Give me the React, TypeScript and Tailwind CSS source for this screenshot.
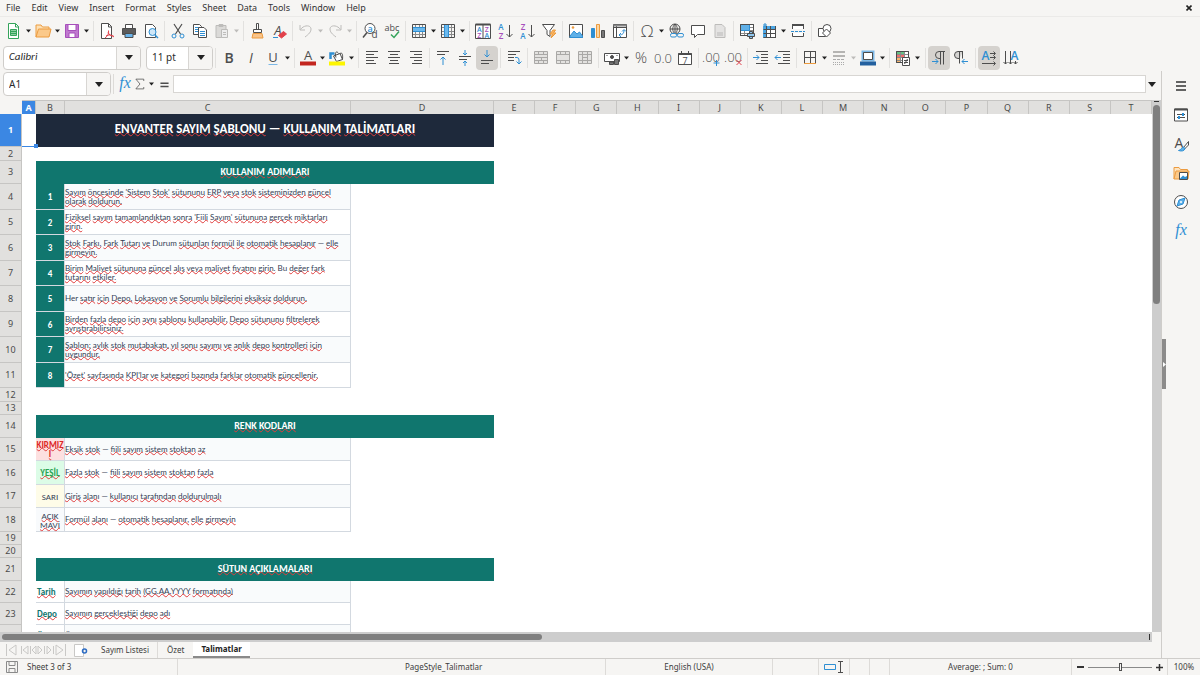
import type { ReactNode } from "react";
import { clsx } from "clsx";

const INK = "#4d4d4d";
const BLUE = "#2f8fd3";
const ORANGE = "#ec9b3f";
const GREEN = "#35a45b";
const PURPLE = "#a74fbb";
const RED = "#e2414b";
const FADED = "#bdbcba";

function Icon({ children, size = 16 }: { children: ReactNode; size?: number }) {
  return (
    <svg
      width={size}
      height={size}
      viewBox="0 0 16 16"
      fill="none"
      stroke={INK}
      strokeWidth="1"
      aria-hidden="true"
      className="shrink-0 overflow-visible"
    >
      {children}
    </svg>
  );
}

function Glyph({
  x = 8,
  y = 13,
  size = 14,
  fill = INK,
  serif,
  bold,
  light,
  italic,
  children,
}: {
  x?: number;
  y?: number;
  size?: number;
  fill?: string;
  serif?: boolean;
  bold?: boolean;
  light?: boolean;
  italic?: boolean;
  children: ReactNode;
}) {
  return (
    <text
      x={x}
      y={y}
      fontSize={size}
      fill={fill}
      stroke="none"
      textAnchor="middle"
      fontFamily={serif ? "Liberation Serif, serif" : "Open Sans, Noto Sans, sans-serif"}
      fontWeight={bold ? 600 : light ? 300 : 400}
      fontStyle={italic ? "italic" : "normal"}
    >
      {children}
    </text>
  );
}

function Lines({ d, color = INK }: { d: string; color?: string }) {
  return <path d={d} stroke={color} />;
}

const icons = {
  newDoc: (
    <>
      <path d="M2.5.5h7l3 3v12h-10z" fill="#fff" stroke={GREEN} />
      <path d="M9.5.5v3.500h3.500" stroke={GREEN} />
      <path d="M4.500 6.500h6v6h-6z M4.500 8.500h6 M4.500 10.500h6" stroke={GREEN} fill="#8ed0a2" />
    </>
  ),
  open: (
    <>
      <path d="M1 14V2h5l1.500 2H14v3" fill="#fde0b4" stroke={ORANGE} />
      <path d="M1 14l2.500-8H16l-2 8z" fill="#fbc98a" stroke={ORANGE} />
    </>
  ),
  save: (
    <>
      <path d="M1.500 1.500h13v13h-13z" fill="#c079cf" stroke={PURPLE} />
      <path d="M4 1.500h8v6H4z" fill="#fff" stroke={PURPLE} />
      <path d="M5 10h6v4.500H5z" fill="#fff" stroke={PURPLE} />
    </>
  ),
  pdf: (
    <>
      <path d="M2.500.5h7l3 3v12h-10z" fill="#fff" />
      <path d="M9.500.5v3.500h3.500" />
      <path d="M6 15c3-2 4-5 3.500-7.500M7 13c3-1.500 5-1.500 8 1M9 9c1 3 3 4 5.500 4" stroke={RED} />
    </>
  ),
  print: (
    <>
      <path d="M4.500 5V1.500h7V5" fill="#fff" />
      <path d="M1.500 5.500h13v6h-13z" fill="#5b5b5b" />
      <path d="M4 10.500h8v4H4z" fill="#6ab4ea" stroke={INK} />
    </>
  ),
  preview: (
    <>
      <path d="M2.500 1.500h7l3 3v10h-10z" fill="#fff" />
      <circle cx="9.500" cy="9" r="3.500" fill="#cfe7f8" stroke={BLUE} />
      <path d="M12 12l3 3" stroke={BLUE} strokeWidth="1.500" />
    </>
  ),
  cut: (
    <>
      <path d="M4 1l6.500 10M12 1L5.500 11" strokeWidth="1.200" />
      <circle cx="4" cy="13" r="2" stroke={BLUE} />
      <circle cx="12" cy="13" r="2" stroke={BLUE} />
    </>
  ),
  copy: (
    <>
      <path d="M1.500 1.500h6l2 2v8h-8z" fill="#fff" />
      <path d="M3 4.500h4M3 6.500h4M3 8.500h3" stroke={BLUE} />
      <path d="M6.500 4.500h5.500l2.500 2.500v7.500h-8z" fill="#fff" />
      <path d="M8 8.500h5M8 10.500h5M8 12.500h5" stroke={BLUE} />
    </>
  ),
  paste: (
    <>
      <path d="M2 2.500h10v12H2z" fill="#dbdad8" stroke={FADED} />
      <path d="M5 1.500h4v2H5z" fill={FADED} stroke={FADED} />
      <path d="M7.500 6.500h6v8h-6z M9 9.500h3 M9 11.500h3" fill="#eee" stroke={FADED} />
    </>
  ),
  clone: (
    <>
      <path d="M7.500.5h2v6h-2z" fill="#fff" />
      <path d="M4.500 6.500h8v3h-8z" fill="#fff" />
      <path d="M4 10.500h9l1 4.500H3z" fill="#f9c48a" stroke={ORANGE} />
    </>
  ),
  clear: (
    <>
      <Glyph x={7} y={12} size={13} italic>A</Glyph>
      <path d="M2 14.500h5" stroke={BLUE} />
      <path d="M7.500 12.500l5-4 3 2.500-5 4z" fill={RED} stroke={RED} />
    </>
  ),
  undo: <path d="M2 2v5h5M2.500 6.500C6 1.500 13 2 13 6c0 3-2 5-6 8" stroke={FADED} />,
  redo: <path d="M14 2v5H9M13.500 6.500C10 1.500 3 2 3 6c0 3 2 5 6 8" stroke={FADED} />,
  find: (
    <>
      <circle cx="8" cy="5.500" r="5" fill="#fff" />
      <path d="M5 9.500L1 14.500" strokeWidth="1.500" />
      <Glyph x={8} y={8.5} size={9} fill={BLUE} bold>a</Glyph>
      <Glyph x={12.5} y={15} size={10}>d</Glyph>
    </>
  ),
  spelling: (
    <>
      <Glyph x={8} y={7.5} size={9}>abc</Glyph>
      <path d="M7 11.500l3 3 5-6" stroke={GREEN} strokeWidth="1.500" />
    </>
  ),
  rows: (
    <>
      <path
        d="M4.500 1v13M8.500 1v13M11.500 1v13M1.500 4.500h13M1.500 8.500h13M1.500 11.500h13"
        stroke="#8a8a8a"
      />
      <path d="M1.500 4.500h13v4h-13z" fill="#6bb9ee" stroke={BLUE} />
      <path d="M1.500 1.500h13v13h-13z" />
    </>
  ),
  columns: (
    <>
      <path
        d="M4.500 1v13M8.500 1v13M11.500 1v13M1.500 4.500h13M1.500 8.500h13M1.500 11.500h13"
        stroke="#8a8a8a"
      />
      <path d="M4.500 1.500h4v13h-4z" fill="#6bb9ee" stroke={BLUE} />
      <path d="M1.500 1.500h13v13h-13z" />
    </>
  ),
  sort: (
    <>
      <path d="M.5 1.500h15v14H.5zM8 1.500v14" fill="#fff" />
      <path d="M.5 1.500h15" strokeWidth="2" />
      <Glyph x={4.2} y={8.5} size={7} fill={BLUE} bold>A</Glyph>
      <Glyph x={4.2} y={15} size={7} fill={PURPLE} bold>Z</Glyph>
      <Glyph x={11.8} y={8.5} size={7} fill={PURPLE} bold>Z</Glyph>
      <Glyph x={11.8} y={15} size={7} fill={BLUE} bold>A</Glyph>
    </>
  ),
  sortAsc: (
    <>
      <Glyph x={4} y={7} size={8} fill={BLUE} bold>A</Glyph>
      <Glyph x={4} y={15.5} size={8} fill={PURPLE} bold>Z</Glyph>
      <path d="M12.500 2v12M9.500 11l3 3 3-3" />
    </>
  ),
  sortDesc: (
    <>
      <Glyph x={4} y={7} size={8} fill={PURPLE} bold>Z</Glyph>
      <Glyph x={4} y={15.5} size={8} fill={BLUE} bold>A</Glyph>
      <path d="M12.500 2v12M9.500 11l3 3 3-3" />
    </>
  ),
  filter: (
    <>
      <path d="M1.500 1.500h12L9 7.500v6l-3-2v-4z" fill="#fff" />
      <path d="M12 7l-3 4h2.500L10 15l5-5h-2.500L14.500 7z" fill="#fbb45e" stroke={ORANGE} />
    </>
  ),
  image: (
    <>
      <path d="M1.500 1.500h13v13h-13z" fill="#fff" />
      <path d="M2 13l4-5 3 3 2.500-2 3 4v1.500H2z" fill="#5fb0e8" stroke={BLUE} />
      <circle cx="5" cy="4.500" r="1.300" fill={ORANGE} stroke="none" />
    </>
  ),
  chart: (
    <>
      <path d="M1.500 5.500h3v9h-3z" fill={BLUE} stroke={BLUE} />
      <path d="M6.500 1.500h3v13h-3z" fill="#fbd6a2" stroke={ORANGE} />
      <path d="M11.500 7.500h3v7h-3z" fill="#777" />
    </>
  ),
  pivot: (
    <>
      <path d="M1.500 1.500h13v13h-13zM1.500 4.500h13M4.500 1.500v13" fill="#fff" />
      <path d="M1.500 2.500h13" stroke="#8a8a8a" strokeWidth="2" />
      <path d="M7 12c4 0 5-2 5-5M9 10l-2 2 2 2M10 8.500l2-2 2 2" stroke={BLUE} />
    </>
  ),
  symbol: <Glyph y={14} size={17} light>Ω</Glyph>,
  link: (
    <>
      <circle cx="7" cy="6" r="5" />
      <path d="M2 6h10M7 1v10M7 1C4 4 4 8 7 11M7 1c3 3 3 7 0 10" />
      <rect x="2.500" y="10.500" width="6" height="3.500" rx="1.500" fill="#f6f5f3" stroke={BLUE} />
      <rect x="9.500" y="10.500" width="6" height="3.500" rx="1.500" fill="#f6f5f3" stroke={BLUE} />
    </>
  ),
  comment: <path d="M1.500 2.500h13v9H7.500L4.500 14.500v-3h-3z" fill="#fff" />,
  header: (
    <>
      <path d="M3 1.500h7l3 3v10H3z" fill="#e4e3e2" stroke={FADED} />
      <path d="M5 9h6v4H5z" fill="#cfcecd" stroke="none" />
    </>
  ),
  printArea: (
    <>
      <path d="M1.500 1.500h13v11h-13z" fill="#fff" />
      <path d="M1.500 4.500h13M1.500 7.500h13M1.500 10.500h8M5.500 1.500v11M10.500 1.500v9" stroke="#8a8a8a" />
      <path d="M1.500 1.500h9v6h-9z" fill="#5fb0e8" stroke={BLUE} />
      <path d="M14.500 9V1.500H1.500v11H8" />
      <path d="M8.500 10.500h7v3h-7zM10.500 8.500h3v2h-3zM10.500 13.500h3v2h-3z" fill="#8fc6ee" />
    </>
  ),
  freeze: (
    <>
      <path d="M5.500 6.500h9v8h-9z" fill="#fff" />
      <path d="M2 3h12.500v3.500H5.500V15H2z" fill="#4ba6e4" stroke="none" />
      <path d="M2.500 6.500h12M5.500 3v12M9.500 3v12M2.500 10.500h12M14.500 3v12M2.500 14.500h12" />
      <path d="M4 0v4M2 2h4" stroke={BLUE} />
    </>
  ),
  split: (
    <>
      <path d="M2.500 6V2.500h11V6M2.500 10v3.500h11V10" fill="#fff" />
      <path d="M2 2h12" strokeWidth="2" />
      <path d="M1 8.500h14" stroke={BLUE} strokeDasharray="3 1" />
    </>
  ),
  shapes: (
    <>
      <path d="M1.500 5.500h7v8h-7z" fill="#fff" />
      <circle cx="10" cy="5.500" r="4" fill="#fff" />
      <path d="M9.500 6l4 4-4 4-4-4z" fill="#fff" />
    </>
  ),
  bold: <Glyph bold size={14}>B</Glyph>,
  italic: <Glyph italic size={14}>I</Glyph>,
  underline: (
    <>
      <Glyph y={12} size={13}>U</Glyph>
      <path d="M3.500 14.500h9" stroke="#7cb8e6" />
    </>
  ),
  fontColor: (
    <>
      <Glyph y={10} size={13}>A</Glyph>
      <path d="M0 13.500h16" stroke="#c3261f" strokeWidth="4" />
    </>
  ),
  highlight: (
    <>
      <path d="M4.500 6L11 3.500l2.500 6-6 2z" fill="#fff" />
      <path d="M1.500 9V3.500h4" stroke={BLUE} strokeWidth="2.500" />
      <path d="M7 7.500C5 2 8 .5 9.500 3.500M11 3.500c2-1 3 0 2.500 6" />
      <path d="M0 13.500h16" stroke="#fdf500" strokeWidth="4" />
    </>
  ),
  left: <Lines d="M2 1.500h12M2 4.500h8M2 7.500h12M2 10.500h8M2 13.500h10" />,
  center: <Lines d="M2 1.500h12M4 4.500h8M2 7.500h12M4 10.500h8M3 13.500h10" />,
  right: <Lines d="M2 1.500h12M6 4.500h8M2 7.500h12M6 10.500h8M4 13.500h10" />,
  top: (
    <>
      <Lines d="M2 1.500h12M2 4.500h8" />
      <Lines color={BLUE} d="M8 7v8M5.500 9.500L8 7l2.500 2.500" />
    </>
  ),
  middle: (
    <>
      <Lines d="M2 6.500h12M2 9.500h8" />
      <Lines color={BLUE} d="M8 0v5M6 3l2 2 2-2M8 16v-5M6 13l2-2 2 2" />
    </>
  ),
  bottom: (
    <>
      <Lines d="M2 10.500h12M2 13.500h8" />
      <Lines color={BLUE} d="M8 0v7M5.500 4.500L8 7l2.500-2.500" />
    </>
  ),
  wrap: (
    <>
      <Lines d="M2 1.500h12M2 4.500h8M2 7.500h6M2 10.500h6" />
      <Lines color={BLUE} d="M9 7.500h2q2 0 2 2.500v4M10.500 11.500l2.500 2.500 2.500-2.500" />
    </>
  ),
  merge1: (
    <path
      d="M1.500 1.500h13v12h-13zM1.500 4.500h13M1.500 7.500h13M1.500 10.500h13M5.500 1.500v3M10.500 1.500v3M8.500 7.500v3M5.500 10.500v3M10.500 10.500v3"
      stroke="#a9a8a6"
      fill="#e3e2e0"
    />
  ),
  merge2: (
    <path
      d="M1.500 1.500h13v12h-13zM1.500 4.500h13M1.500 10.500h13M5.500 1.500v3M10.500 1.500v3M5.500 10.500v3M10.500 10.500v3"
      stroke="#a9a8a6"
      fill="#e3e2e0"
    />
  ),
  merge3: (
    <path
      d="M1.500 1.500h13v12h-13zM1.500 4.500h13M1.500 10.500h13M5.500 1.500v12M10.500 1.500v12M5.500 7.500h5"
      stroke="#a9a8a6"
      fill="#e3e2e0"
    />
  ),
  currency: (
    <>
      <path d="M.5 3.500h15v8H.5z" fill="#fff" />
      <circle cx="8" cy="7" r="1.500" fill={INK} />
      <path d="M2.500 5.500h1M12.500 5.500h1" />
      <path d="M5.500 12v2.500h4V12zM10.500 9.500h4v5h-4z" fill="#777" />
    </>
  ),
  percent: <Glyph y={13} size={15} light>%</Glyph>,
  number: <Glyph y={13} size={13} light>0.0</Glyph>,
  date: (
    <>
      <path d="M1.500 3.500h13v11h-13z" fill="#fff" />
      <path d="M1.500 4h13" strokeWidth="2" />
      <path d="M4.500 1v3M11.500 1v3" />
      <Glyph y={13.5} size={9}>7</Glyph>
    </>
  ),
  addDecimal: (
    <>
      <Glyph x={7} y={12} size={13} light>.00</Glyph>
      <path d="M12.500 10v6M9.500 13h6" stroke={BLUE} />
    </>
  ),
  delDecimal: (
    <>
      <Glyph x={7} y={12} size={13} light>.00</Glyph>
      <path d="M10.500 10l5 5M15.500 10l-5 5" stroke={RED} />
    </>
  ),
  indent: (
    <>
      <Lines d="M3 1.500h12M8 4.500h7M8 7.500h7M8 10.500h7M3 13.500h12" />
      <Lines color={BLUE} d="M0 7.500h6M3.500 5L6 7.500 3.500 10" />
    </>
  ),
  outdent: (
    <>
      <Lines d="M3 1.500h12M8 4.500h7M8 7.500h7M8 10.500h7M3 13.500h12" />
      <Lines color={BLUE} d="M0 7.500h6M2.500 5L0 7.500 2.500 10" />
    </>
  ),
  borders: (
    <>
      <path d="M2 1.500h12M2.500 1.500v12M8.500 1.500v12M13.500 1.500v12M2 7.500h12" />
      <path d="M2 13.500h12" stroke={ORANGE} />
    </>
  ),
  borderStyle: (
    <>
      <path d="M2 2h12M2 6h12" stroke="#b5b4b2" strokeWidth="2" />
      <path d="M2 9.500h12" stroke="#aaa" strokeDasharray="3 1" />
      <path d="M2 12.500h12M2 14.500h12" stroke="#aaa" strokeDasharray="1 1" />
    </>
  ),
  borderColor: (
    <>
      <path d="M2.500 1.500h11v9h-11z" fill="#fff" stroke="#7db9e8" strokeWidth="2" />
      <path d="M3.500 2.500h9v7h-9z" />
      <path d="M0 13.500h16" stroke="#23609f" strokeWidth="4" />
    </>
  ),
  conditional: (
    <>
      <path d="M1.500 1.500h12v11h-12z" fill="#fff" />
      <path d="M2 2h7.500v2.500H2z" fill="#67c084" stroke="none" />
      <path d="M2 5h7.500v2.500H2z" fill="#ef6f6f" stroke="none" />
      <path d="M2 8h3.500v4H2z" fill="#f9b66d" stroke="none" />
      <path d="M1.500 4.500h12M1.500 7.500h12M1.500 10.500h12M5.500 1.500v11M9.500 1.500v11" stroke="#8a8a8a" />
      <path d="M1.500 1.500h12v11h-12z" />
      <path d="M7.500 7.500h7v8h-7z" fill="#fff" />
      <path d="M9 10.500h4M9 12.500h4M12.500 9l-3 5" />
    </>
  ),
  ltr: (
    <>
      <path d="M14 1.500H8a3.500 3.500 0 0 0 0 7h1.500M9.500 1.500v13M12.500 1.500v13" />
      <Lines color={BLUE} d="M1 11.500h6M4.500 9L7 11.500 4.500 14" />
    </>
  ),
  rtl: (
    <>
      <path d="M10 1.500H5a3.500 3.500 0 0 0 0 7h1.500M6.500 1.500v12M9.500 1.500v7" fill="#d5d4d2" />
      <Lines color={BLUE} d="M9 11.500h6M11.500 9L9 11.500l2.500 2.500" />
    </>
  ),
  textRight: (
    <>
      <Glyph x={4.5} y={10} size={12} fill={BLUE} bold>A</Glyph>
      <path d="M9 3.500h5M9 7.500h5M1 13.500h13M12.500 1.500l2 2-2 2M12.500 5.500l2 2-2 2M12.500 11.500l2 2-2 2" />
    </>
  ),
  textDown: (
    <>
      <Glyph x={11.5} y={10} size={12} fill={BLUE} bold>A</Glyph>
      <path d="M2.500 1v13M7.500 1v13M12.500 11v3M.5 12l2 2 2-2M5.500 12l2 2 2-2M10.500 12l2 2 2-2" />
    </>
  ),
  fx: <Glyph y={12} size={16} fill={BLUE} serif italic>fx</Glyph>,
  sum: <path d="M13 4V1.500H2.500L8 8l-5.500 6.500H13V12" />,
  equals: <path d="M3 6.500h10M3 10.500h10" strokeWidth="2" />,
  menu: <path d="M3 4h10M3 8h10M3 12h10" strokeWidth="1.600" stroke="#333" />,
  properties: (
    <>
      <path d="M1.500 2h13v12h-13z" fill="#fff" />
      <path d="M1.500 2.500h13" strokeWidth="2" />
      <path d="M4 7.500h8M4 10.500h8" />
      <path d="M10 6v3M6 9v3" stroke={BLUE} strokeWidth="2" />
    </>
  ),
  styles: (
    <>
      <Glyph x={6} y={12} size={14}>A</Glyph>
      <path d="M15.500 5.500l-5 6 1 1.500 4-4z" fill="#fff" />
      <path d="M10.500 11c-2 0-2 3-5 3.500 3 1 6 .5 6.500-2z" fill="#5fb0e8" stroke={BLUE} />
    </>
  ),
  gallery: (
    <>
      <path d="M1 14V2.500h5l1.500 2h7v3" stroke={ORANGE} fill="#fde3bf" />
      <path d="M1 14l2-8h13l-1 8z" fill="#fbc98a" stroke={ORANGE} />
      <path d="M6.500 7.500h8v7h-8z" fill="#fff" />
      <path d="M7 13.500l3-3 2 1.500 2-1v3H7z" fill={BLUE} stroke="none" />
    </>
  ),
  navigator: (
    <>
      <circle cx="8" cy="8" r="6.500" fill="#fff" />
      <path d="M12 4l-2 6-6 2 2-6z" fill="#5fb0e8" stroke={BLUE} />
      <circle cx="8" cy="8" r="1" fill="#fff" stroke="none" />
    </>
  ),
  disk: (
    <>
      <path d="M2.500 2.500h11v11h-11z" stroke="#8a8a8a" />
      <path d="M5 2.500h6v4H5zM5 9.500h6v4H5z" stroke="#8a8a8a" />
    </>
  ),
};

type IconName = keyof typeof icons;

interface Tool {
  icon: IconName;
  label: string;
  menu?: boolean;
  off?: boolean;
  active?: boolean;
}

const STANDARD: Tool[][] = [
  [
    { icon: "newDoc", label: "New", menu: true },
    { icon: "open", label: "Open", menu: true },
    { icon: "save", label: "Save", menu: true },
  ],
  [
    { icon: "pdf", label: "Export as PDF" },
    { icon: "print", label: "Print" },
    { icon: "preview", label: "Print Preview" },
  ],
  [
    { icon: "cut", label: "Cut" },
    { icon: "copy", label: "Copy" },
    { icon: "paste", label: "Paste", menu: true, off: true },
  ],
  [
    { icon: "clone", label: "Clone Formatting" },
    { icon: "clear", label: "Clear Direct Formatting" },
  ],
  [
    { icon: "undo", label: "Undo", menu: true, off: true },
    { icon: "redo", label: "Redo", menu: true, off: true },
  ],
  [
    { icon: "find", label: "Find and Replace" },
    { icon: "spelling", label: "Spelling" },
  ],
  [
    { icon: "rows", label: "Row", menu: true },
    { icon: "columns", label: "Column", menu: true },
  ],
  [
    { icon: "sort", label: "Sort" },
    { icon: "sortAsc", label: "Sort Ascending" },
    { icon: "sortDesc", label: "Sort Descending" },
    { icon: "filter", label: "AutoFilter" },
  ],
  [
    { icon: "image", label: "Insert Image" },
    { icon: "chart", label: "Insert Chart" },
    { icon: "pivot", label: "Insert Pivot Table" },
  ],
  [
    { icon: "symbol", label: "Special Character", menu: true },
    { icon: "link", label: "Insert Hyperlink" },
    { icon: "comment", label: "Insert Comment" },
    { icon: "header", label: "Headers and Footers", off: true },
  ],
  [
    { icon: "printArea", label: "Define Print Area" },
    { icon: "freeze", label: "Freeze Rows and Columns", menu: true },
    { icon: "split", label: "Split Window" },
  ],
  [{ icon: "shapes", label: "Show Draw Functions" }],
];

const FORMATTING: Tool[][] = [
  [
    { icon: "bold", label: "Bold" },
    { icon: "italic", label: "Italic" },
    { icon: "underline", label: "Underline", menu: true },
  ],
  [
    { icon: "fontColor", label: "Font Color", menu: true },
    { icon: "highlight", label: "Background Color", menu: true },
  ],
  [
    { icon: "left", label: "Align Left" },
    { icon: "center", label: "Center Horizontally" },
    { icon: "right", label: "Align Right" },
  ],
  [
    { icon: "top", label: "Align Top" },
    { icon: "middle", label: "Center Vertically" },
    { icon: "bottom", label: "Align Bottom", active: true },
  ],
  [{ icon: "wrap", label: "Wrap Text" }],
  [
    { icon: "merge1", label: "Merge and Center", off: true },
    { icon: "merge2", label: "Merge Cells", off: true },
    { icon: "merge3", label: "Unmerge Cells", off: true },
  ],
  [
    { icon: "currency", label: "Format as Currency", menu: true },
    { icon: "percent", label: "Format as Percent" },
    { icon: "number", label: "Format as Number" },
    { icon: "date", label: "Format as Date" },
  ],
  [
    { icon: "addDecimal", label: "Add Decimal Place" },
    { icon: "delDecimal", label: "Delete Decimal Place" },
  ],
  [
    { icon: "indent", label: "Increase Indent" },
    { icon: "outdent", label: "Decrease Indent" },
  ],
  [
    { icon: "borders", label: "Borders", menu: true },
    { icon: "borderStyle", label: "Border Style", menu: true, off: true },
    { icon: "borderColor", label: "Border Color", menu: true },
  ],
  [{ icon: "conditional", label: "Conditional", menu: true }],
  [
    { icon: "ltr", label: "Left-To-Right", active: true },
    { icon: "rtl", label: "Right-To-Left" },
  ],
  [
    { icon: "textRight", label: "Text direction from left to right", active: true },
    { icon: "textDown", label: "Text direction from top to bottom" },
  ],
];

const MENUS = ["File", "Edit", "View", "Insert", "Format", "Styles", "Sheet", "Data", "Tools", "Window", "Help"];

const SIDEBAR: { icon: IconName; label: string }[] = [
  { icon: "menu", label: "Sidebar Settings" },
  { icon: "properties", label: "Properties" },
  { icon: "styles", label: "Styles" },
  { icon: "gallery", label: "Gallery" },
  { icon: "navigator", label: "Navigator" },
  { icon: "fx", label: "Functions" },
];

const COLUMNS = "ABCDEFGHIJKLMNOPQRST".split("");

type Row =
  | { kind: "empty"; h: string }
  | { kind: "title"; h: string; text: string }
  | { kind: "section"; h: string; text: string }
  | { kind: "item"; h: string; tag: string; tagClass: string; text: string; shaded?: boolean };

const STEP = "bg-[#10766e] text-white text-center font-bold";
const KEY = "text-[#10766e] text-left font-bold pl-px";

const ROWS: Row[] = [
  { kind: "title", h: "h-[33px]", text: "ENVANTER SAYIM ŞABLONU — KULLANIM TALİMATLARI" },
  { kind: "empty", h: "h-[14px]" },
  { kind: "section", h: "h-[23px]", text: "KULLANIM ADIMLARI" },
  { kind: "item", h: "h-[26px]", tag: "1", tagClass: STEP, shaded: true, text: "Sayım öncesinde 'Sistem Stok' sütununu ERP veya stok sisteminizden güncel\nolarak doldurun." },
  { kind: "item", h: "h-[25px]", tag: "2", tagClass: STEP, text: "Fiziksel sayım tamamlandıktan sonra 'Fiili Sayım' sütununa gerçek miktarları\ngirin." },
  { kind: "item", h: "h-[26px]", tag: "3", tagClass: STEP, shaded: true, text: "Stok Farkı, Fark Tutarı ve Durum sütunları formül ile otomatik hesaplanır — elle\ngirmeyin." },
  { kind: "item", h: "h-[25px]", tag: "4", tagClass: STEP, text: "Birim Maliyet sütununa güncel alış veya maliyet fiyatını girin. Bu değer fark\ntutarını etkiler." },
  { kind: "item", h: "h-[26px]", tag: "5", tagClass: STEP, shaded: true, text: "Her satır için Depo, Lokasyon ve Sorumlu bilgilerini eksiksiz doldurun." },
  { kind: "item", h: "h-[25px]", tag: "6", tagClass: STEP, text: "Birden fazla depo için aynı şablonu kullanabilir, Depo sütununu filtrelerek\nayrıştırabilirsiniz." },
  { kind: "item", h: "h-[26px]", tag: "7", tagClass: STEP, shaded: true, text: "Şablon; aylık stok mutabakatı, yıl sonu sayımı ve anlık depo kontrolleri için\nuygundur." },
  { kind: "item", h: "h-[25px]", tag: "8", tagClass: STEP, text: "'Özet' sayfasında KPI'lar ve kategori bazında farklar otomatik güncellenir." },
  { kind: "empty", h: "h-[14px]" },
  { kind: "empty", h: "h-[13px]" },
  { kind: "section", h: "h-[23px]", text: "RENK KODLARI" },
  { kind: "item", h: "h-[23px]", tag: "KIRMIZ\nI", tagClass: "bg-[#fde0e0] text-[#dc2626] text-center font-bold", shaded: true, text: "Eksik stok — fiili sayım sistem stoktan az" },
  { kind: "item", h: "h-[24px]", tag: "YEŞİL", tagClass: "bg-[#dcfce7] text-[#2ba455] text-center font-bold", text: "Fazla stok — fiili sayım sistem stoktan fazla" },
  { kind: "item", h: "h-[23px]", tag: "SARI", tagClass: "bg-[#fefce8] text-[#334155] text-center", shaded: true, text: "Giriş alanı — kullanıcı tarafından doldurulmalı" },
  { kind: "item", h: "h-[24px]", tag: "AÇIK\nMAVİ", tagClass: "bg-[#f8fafc] text-[#334155] text-center", text: "Formül alanı — otomatik hesaplanır, elle girmeyin" },
  { kind: "empty", h: "h-[13px]" },
  { kind: "empty", h: "h-[13px]" },
  { kind: "section", h: "h-[23px]", text: "SÜTUN AÇIKLAMALARI" },
  { kind: "item", h: "h-[22px]", tag: "Tarih", tagClass: KEY, shaded: true, text: "Sayımın yapıldığı tarih (GG.AA.YYYY formatında)" },
  { kind: "item", h: "h-[22px]", tag: "Depo", tagClass: KEY, text: "Sayımın gerçekleştiği depo adı" },
  { kind: "item", h: "h-[22px]", tag: "Ürün", tagClass: KEY, shaded: true, text: "Ürün veya malzeme kodu (stok kartı)" },
];

// Words the spell checker accepts, so they get no wavy line.
const KNOWN = new Set(["—", "Bu", "Her", "Durum", "SARI"]);

function Spelled({ text }: { text: string }) {
  return (
    <span className="whitespace-pre">
      {text.split(/(\s+)/).map((word, i) =>
        !word.trim() || KNOWN.has(word) || /^\d+$/.test(word) ? (
          word
        ) : (
          <span
            key={i}
            className="underline decoration-[#e03c3c] decoration-wavy decoration-1 underline-offset-[-1px] [text-decoration-skip-ink:none]"
          >
            {word}
          </span>
        ),
      )}
    </span>
  );
}

function Arrow({ off, big }: { off?: boolean; big?: boolean }) {
  return (
    <svg width={big ? 8 : 5} height={big ? 5 : 4} viewBox="0 0 8 5" aria-hidden="true">
      <path d="M0 0h8L4 5z" fill={off ? FADED : "#222"} />
    </svg>
  );
}

function Toolbar({ groups, label }: { groups: Tool[][]; label: string }) {
  return (
    <div role="toolbar" aria-label={label} className="flex h-full items-center">
      {groups.map((group, i) => (
        <div key={i} className="flex items-center">
          {i > 0 && (
            <span className={clsx("mr-[2px] h-5 w-px bg-[#e2e1df]", group[0].active ? "ml-[3px]" : "ml-[2px]")} />
          )}
          {group.map((tool) => (
            <div key={tool.icon} className={clsx("flex items-center", tool.menu && "last:pr-px")}>
              <button
                type="button"
                aria-label={tool.label}
                disabled={tool.off}
                aria-pressed={tool.active}
                className={clsx(
                  "flex h-6 w-[22px] items-center justify-center rounded",
                  tool.active && "bg-[#d5d2ce]",
                )}
              >
                <Icon>{icons[tool.icon]}</Icon>
              </button>
              {tool.menu && (
                <button
                  type="button"
                  aria-label={`${tool.label} options`}
                  disabled={tool.off}
                  className="flex h-6 w-[7px] items-center justify-center"
                >
                  <Arrow off={tool.off} />
                </button>
              )}
            </div>
          ))}
        </div>
      ))}
    </div>
  );
}

function Combo({ label, value, width, className }: { label: string; value: string; width: string; className?: string }) {
  return (
    <div className={clsx("flex h-6 shrink-0 overflow-hidden rounded border border-[#cfcdca] bg-white", width)}>
      <input
        aria-label={label}
        defaultValue={value}
        className={clsx("min-w-0 flex-1 px-[5px] text-[#2b2b2b] outline-none", className)}
      />
      <button
        type="button"
        aria-label={`${label} list`}
        className="flex w-6 items-center justify-center border-l border-[#d8d6d3] bg-[#f6f5f3]"
      >
        <Arrow big />
      </button>
    </div>
  );
}

function FormulaBar() {
  return (
    <div className="flex h-[29px] items-center bg-[#f6f5f3] pb-[3px] pl-[3px]">
      <Combo label="Name Box" value="A1" width="w-[108px]" className="text-[10px]" />
      <span className="mx-[2px] h-5 w-px bg-[#dddbd8]" />
      <button type="button" aria-label="Function Wizard" className="flex w-[18px] justify-center">
        <Icon>{icons.fx}</Icon>
      </button>
      <button type="button" aria-label="Select Function" className="flex w-[22px] items-center">
        <Icon size={12}>{icons.sum}</Icon>
        <span className="ml-[3px]">
          <Arrow />
        </span>
      </button>
      <button type="button" aria-label="Formula" className="flex w-[17px] justify-center">
        <Icon size={13}>{icons.equals}</Icon>
      </button>
      <input
        aria-label="Input line"
        className="h-[18px] min-w-0 flex-1 border border-[#d8d6d3] bg-white px-1 outline-none"
      />
      <button type="button" aria-label="Expand Formula Bar" className="flex w-[15px] justify-center pr-[3px]">
        <Arrow big />
      </button>
    </div>
  );
}

function SheetRow({ row, index }: { row: Row; index: number }) {
  const first = index === 0;
  return (
    <tr className={row.h}>
      <th
        scope="row"
        className={clsx(
          "border-r border-b border-[#c6c5c3] text-[9px] leading-3",
          first ? "bg-[#3b87e3] font-bold text-white" : "bg-[#e1e0de] font-normal text-[#4a4a4a]",
        )}
      >
        {index + 1}
      </th>
      <td className={clsx(first && "relative border-b border-[#3b87e3]")}>
        {first && <span className="absolute -right-[2px] -bottom-[2px] size-1 bg-[#3b87e3]" />}
      </td>
      {row.kind === "title" && (
        <td colSpan={3} className="bg-[#1e293b] pb-[3px] text-center text-[13px] leading-4 font-bold text-white">
          <Spelled text={row.text} />
        </td>
      )}
      {row.kind === "section" && (
        <td colSpan={3} className="bg-[#10766e] pb-px text-center text-[10px] leading-3 font-bold text-white">
          <Spelled text={row.text} />
        </td>
      )}
      {row.kind === "item" && (
        <>
          <td className={clsx("border-r border-b border-[#d3d9e0] text-[9px] leading-[9px]", row.tagClass)}>
            <Spelled text={row.tag} />
          </td>
          <td
            className={clsx(
              "border-r border-b border-[#d3d9e0] font-['Lato',sans-serif] text-[8px] leading-[9px] text-[#334155]",
              row.shaded && "bg-[#f9fbfc]",
            )}
          >
            <Spelled text={row.text} />
          </td>
        </>
      )}
    </tr>
  );
}

function Sheet() {
  return (
    <div className="min-h-0 min-w-0 flex-1 overflow-hidden bg-white">
      <table className="w-full table-fixed border-separate border-spacing-0 font-['Carlito','Lato',sans-serif]">
        <colgroup>
          <col className="w-[22px]" />
          <col className="w-[14px]" />
          <col className="w-[29px]" />
          <col className="w-[286px]" />
          <col className="w-[143px]" />
          <col span={16} />
        </colgroup>
        <thead className="font-['Noto_Sans','Open_Sans',sans-serif]">
          <tr className="h-[14px]">
            <td className="bg-[#f6f5f3]" />
            {COLUMNS.map((name) => (
              <th
                key={name}
                scope="col"
                className={clsx(
                  "border-t border-r border-[#c6c5c3] text-[9px] leading-3",
                  name === "A" ? "bg-[#3b87e3] font-bold text-white" : "bg-[#e1e0de] font-normal text-[#4a4a4a]",
                )}
              >
                {name}
              </th>
            ))}
          </tr>
        </thead>
        <tbody className="[&_th]:font-['Noto_Sans','Open_Sans',sans-serif]">
          {ROWS.map((row, i) => (
            <SheetRow key={i} row={row} index={i} />
          ))}
        </tbody>
      </table>
    </div>
  );
}

function TabBar() {
  return (
    <div className="flex h-4 items-stretch text-[8px] leading-3 text-[#3d3d3d]">
      <div className="flex w-[72px] items-center pl-[5px]">
        <svg width="62" height="12" viewBox="0 0 62 12" fill="none" stroke="#c9c8c6" aria-hidden="true">
          <path d="M1.500 0v12M11 1L4 6l7 5zM16.500 2v8M23 2l-5 4 5 4zM25.500 2v8M31 2l-4 4 4 4zM33 2l4 4-4 4zM39.500 2v8M42 2l4 4-4 4zM48.500 2v8M51 1l7 5-7 5zM60.500 0v12" />
        </svg>
      </div>
      <button type="button" aria-label="Add Sheet" className="flex w-[21px] items-center pl-[2px]">
        <svg width="14" height="13" viewBox="0 0 14 13" fill="none" aria-hidden="true">
          <path d="M.5.500h9v12h-9z" fill="#fff" stroke="#c9c8c6" />
          <circle cx="10.500" cy="7" r="2" stroke="#2b6cc4" strokeWidth="1.500" />
        </svg>
      </button>
      <div className="flex divide-x divide-[#dddbd8]">
        <button type="button" className="px-2">Sayım Listesi</button>
        <button type="button" className="px-[9px]">Özet</button>
      </div>
      <button type="button" className="border-b-2 border-[#8a8a8a] bg-white px-2 font-bold text-[#222]">
        Talimatlar
      </button>
    </div>
  );
}

function StatusBar() {
  return (
    <footer className="flex h-[17px] shrink-0 items-stretch divide-x divide-[#dddbd8] border-t border-[#cfcdca] text-[8px] leading-4 text-[#3d3d3d]">
      <div className="flex w-[178px] items-center pl-1">
        <Icon>{icons.disk}</Icon>
        <span className="ml-[7px]">Sheet 3 of 3</span>
      </div>
      <div className="flex flex-1 justify-end">
        <span className="w-[200px]">PageStyle_Talimatlar</span>
      </div>
      <div className="w-[167px] text-center">English (USA)</div>
      <div className="w-[46px]" />
      <div className="flex w-[31px] items-center justify-center">
        <svg width="20" height="12" viewBox="0 0 20 12" fill="none" aria-hidden="true">
          <path d="M.5 3.500h11v5H.5z" stroke="#2f8fd3" />
          <path d="M14 .5h5M14 11.500h5M16.500.5v11" stroke="#4d4d4d" />
        </svg>
      </div>
      <div className="w-5" />
      <div className="w-5" />
      <div className="w-[182px] text-center">Average: ; Sum: 0</div>
      <div className="flex w-[96px] items-center justify-between pr-1 pl-[5px]">
        <button type="button" aria-label="Zoom Out" className="h-[2px] w-[7px] bg-[#333]" />
        <input
          type="range"
          aria-label="Zoom"
          min={0}
          max={100}
          defaultValue={50}
          className="h-3 w-16 appearance-none bg-[linear-gradient(#8a8a8a,#8a8a8a)] bg-[length:100%_1px] bg-center bg-no-repeat [&::-webkit-slider-thumb]:h-2 [&::-webkit-slider-thumb]:w-[3px] [&::-webkit-slider-thumb]:appearance-none [&::-webkit-slider-thumb]:border [&::-webkit-slider-thumb]:border-[#4d4d4d] [&::-webkit-slider-thumb]:bg-[#f6f5f3]"
        />
        <button type="button" aria-label="Zoom In">
          <svg width="7" height="7" viewBox="0 0 7 7" className="block" aria-hidden="true">
            <path d="M3.500 0v7M0 3.500h7" stroke="#333" strokeWidth="1.500" />
          </svg>
        </button>
      </div>
      <div className="w-8 text-center">100%</div>
    </footer>
  );
}

export default function App() {
  return (
    <div className="flex h-screen flex-col overflow-hidden bg-[#f6f5f3] font-['Noto_Sans','Open_Sans',sans-serif]">
      <nav className="flex h-[17px] shrink-0 items-center gap-px border-b border-[#ebeae8] pr-2 pl-px text-[9px] leading-4 text-[#333]">
        {MENUS.map((item) => (
          <button key={item} type="button" className="px-[5px]">
            {item}
          </button>
        ))}
        <button type="button" aria-label="Close Document" className="ml-auto">
          <svg width="6" height="6" viewBox="0 0 6 6" className="block" aria-hidden="true">
            <path d="M.5.5l5 5M5.500.5l-5 5" stroke="#222" strokeWidth="1.600" />
          </svg>
        </button>
      </nav>

      <div className="h-[27px] shrink-0 pl-[3px]">
        <Toolbar groups={STANDARD} label="Standard" />
      </div>

      <div className="flex h-[27px] shrink-0 items-center pl-[3px]">
        <Combo label="Font Name" value="Calibri" width="w-[138px]" className="font-['Carlito','Lato',sans-serif] text-[11px] italic" />
        <span className="w-[5px]" />
        <Combo label="Font Size" value="11 pt" width="w-[67px]" className="text-[10px]" />
        <span className="mx-[2px] h-5 w-px bg-[#e2e1df]" />
        <Toolbar groups={FORMATTING} label="Formatting" />
      </div>

      <div className="flex min-h-0 flex-1">
        <main className="flex min-w-0 flex-1 flex-col">
          <FormulaBar />
          <div className="flex min-h-0 flex-1">
            <Sheet />
            <div className="flex w-[9px] shrink-0 flex-col bg-[#cdcdcd] px-px pt-[1px]">
              <span className="mx-px h-px bg-[#333]" />
              <span className="mt-[3px] h-[37.5%] rounded-full bg-[#7f7f7f]" />
            </div>
          </div>
          <div className="mr-[9px] flex h-[10px] shrink-0 items-center justify-between bg-[#cdcdcd] px-[2px]">
            <span className="h-[6px] w-[47%] rounded-full bg-[#7f7f7f]" />
            <span className="h-[6px] w-px bg-[#333]" />
          </div>
          <TabBar />
        </main>

        <aside className="relative flex w-[39px] shrink-0 flex-col items-center gap-[13px] border-l border-[#cfcdca] pt-[7px]">
          {SIDEBAR.map((item) => (
            <button key={item.icon} type="button" aria-label={item.label}>
              <Icon>{icons[item.icon]}</Icon>
            </button>
          ))}
          <button
            type="button"
            aria-label="Hide Sidebar"
            className="absolute top-[268px] left-0 flex h-[50px] w-1 items-center justify-center bg-[#8c8b8a]"
          >
            <svg width="3" height="5" viewBox="0 0 3 5" aria-hidden="true">
              <path d="M0 0l3 2.500L0 5z" fill="#fff" />
            </svg>
          </button>
        </aside>
      </div>

      <StatusBar />
    </div>
  );
}
